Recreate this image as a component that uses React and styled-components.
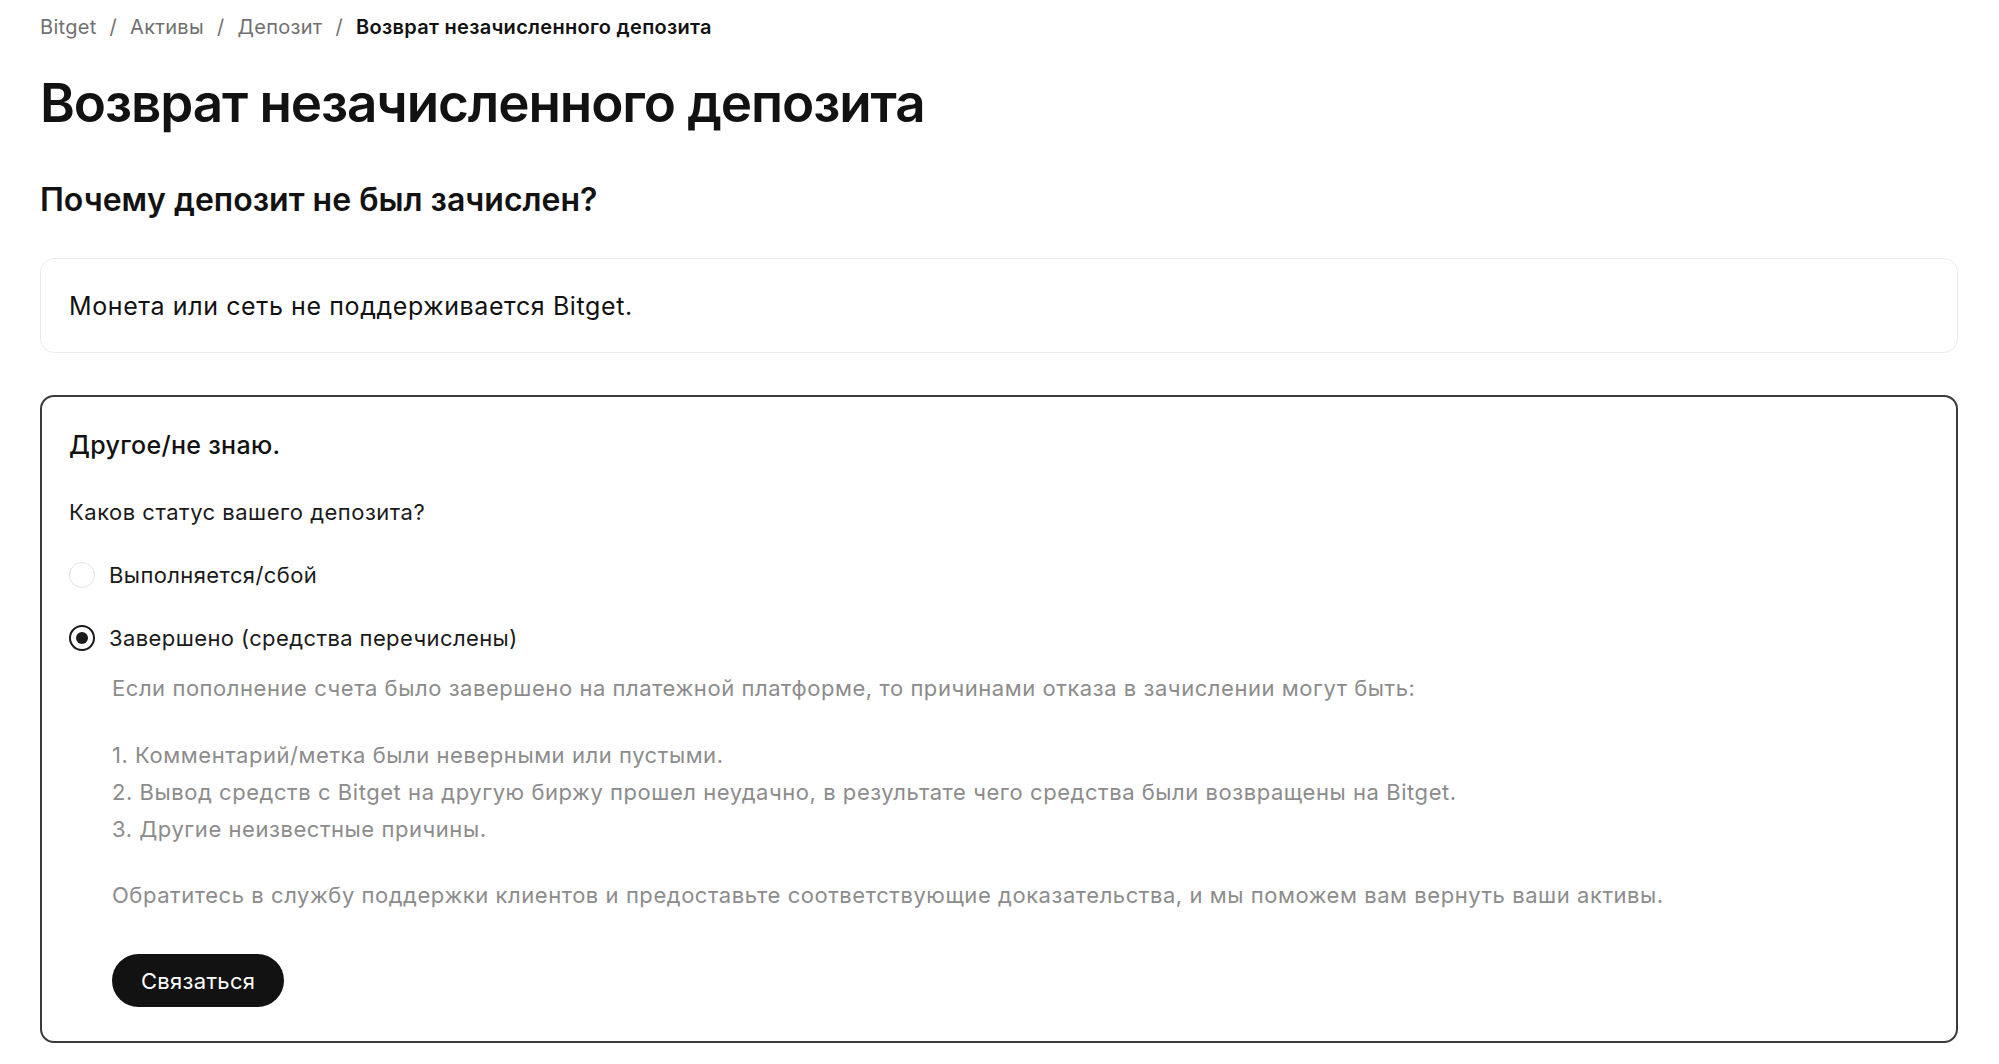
import React from "react";
import styled, { createGlobalStyle } from "styled-components";

const GlobalStyle = createGlobalStyle`
  body {
    margin: 0;
    background: #ffffff;
    font-family: Inter, "Noto Sans", "Liberation Sans", sans-serif;
    color: #121212;
  }
  * { box-sizing: border-box; }
`;

const Page = styled.div`
  padding: 13px 41px 0 40px;
`;

const Breadcrumbs = styled.nav`
  display: flex;
  align-items: center;
  gap: 13px;
  font-size: 20px;
  line-height: 28px;
  letter-spacing: 0.3px;
  color: #707070;
`;

const Crumb = styled.span`
  color: ${(p) => (p.current ? "#121212" : "#707070")};
  font-weight: ${(p) => (p.current ? 600 : 400)};
`;

const Sep = styled.span`
  color: #707070;
`;

const Title = styled.h1`
  margin: 28px 0 0;
  font-size: 53px;
  line-height: 68px;
  font-weight: 600;
  letter-spacing: -1.1px;
`;

const Subtitle = styled.h2`
  margin: 43px 0 0;
  font-size: 32px;
  line-height: 40px;
  font-weight: 600;
`;

const OptionCard = styled.div`
  margin-top: ${(p) => p.gap}px;
  border: ${(p) => (p.active ? "2px solid #3a3a3a" : "1.5px solid #ebebeb")};
  border-radius: 14px;
  padding: ${(p) => (p.active ? "32px 27px 34px" : "0 28px")};
  min-height: ${(p) => (p.active ? "auto" : "95px")};
  display: flex;
  flex-direction: column;
  justify-content: center;
`;

const OptionText = styled.div`
  font-size: 25px;
  line-height: 32px;
  letter-spacing: ${(p) => (p.strong ? 0.3 : 0.6)}px;
  font-weight: ${(p) => (p.strong ? 500 : 400)};
`;

const Question = styled.div`
  margin-top: 37px;
  font-size: 22px;
  line-height: 28px;
  letter-spacing: 0.5px;
  color: #1a1a1a;
`;

const RadioRow = styled.label`
  display: flex;
  align-items: center;
  gap: 14px;
  height: 32px;
  margin-top: ${(p) => p.gap}px;
  font-size: 22px;
  letter-spacing: 0.4px;
  color: #1a1a1a;
`;

const RadioDot = styled.span`
  width: 26px;
  height: 26px;
  border-radius: 50%;
  border: ${(p) => (p.checked ? "2px solid #1a1a1a" : "1.5px solid #e2e2e2")};
  display: flex;
  align-items: center;
  justify-content: center;
  flex-shrink: 0;
  &::after {
    content: "";
    display: ${(p) => (p.checked ? "block" : "none")};
    width: 12px;
    height: 12px;
    border-radius: 50%;
    background: #1a1a1a;
  }
`;

const Details = styled.div`
  padding-left: 43px;
  margin-top: 16px;
  color: #8c8c8c;
  font-size: 22px;
  line-height: 37px;
  letter-spacing: 0.55px;
`;

const Para = styled.p`
  margin: ${(p) => p.gap || 0}px 0 0;
`;

const ContactButton = styled.button`
  margin-top: 40px;
  height: 53px;
  padding: 0 29px;
  border: none;
  border-radius: 27px;
  background: #121212;
  color: #ffffff;
  font-family: inherit;
  font-size: 22px;
  letter-spacing: 0.3px;
  cursor: pointer;
`;

const App = () => {
  return (
    <>
      <GlobalStyle />
      <Page>
        <Breadcrumbs>
          <Crumb>Bitget</Crumb>
          <Sep>/</Sep>
          <Crumb>Активы</Crumb>
          <Sep>/</Sep>
          <Crumb>Депозит</Crumb>
          <Sep>/</Sep>
          <Crumb current>Возврат незачисленного депозита</Crumb>
        </Breadcrumbs>

        <Title>Возврат незачисленного депозита</Title>
        <Subtitle>Почему депозит не был зачислен?</Subtitle>

        <OptionCard gap={38}>
          <OptionText>Монета или сеть не поддерживается Bitget.</OptionText>
        </OptionCard>

        <OptionCard gap={42} active>
          <OptionText strong>Другое/не знаю.</OptionText>
          <Question>Каков статус вашего депозита?</Question>
          <RadioRow gap={33}>
            <RadioDot />
            Выполняется/сбой
          </RadioRow>
          <RadioRow gap={31}>
            <RadioDot checked />
            Завершено (средства перечислены)
          </RadioRow>
          <Details>
            <Para>
              Если пополнение счета было завершено на платежной платформе, то причинами отказа в зачислении могут быть:
            </Para>
            <Para gap={30}>1. Комментарий/метка были неверными или пустыми.</Para>
            <Para>
              2. Вывод средств с Bitget на другую биржу прошел неудачно, в результате чего средства были возвращены на Bitget.
            </Para>
            <Para>3. Другие неизвестные причины.</Para>
            <Para gap={29}>
              Обратитесь в службу поддержки клиентов и предоставьте соответствующие доказательства, и мы поможем вам вернуть ваши активы.
            </Para>
            <ContactButton>Связаться</ContactButton>
          </Details>
        </OptionCard>
      </Page>
    </>
  );
};

export default App;
